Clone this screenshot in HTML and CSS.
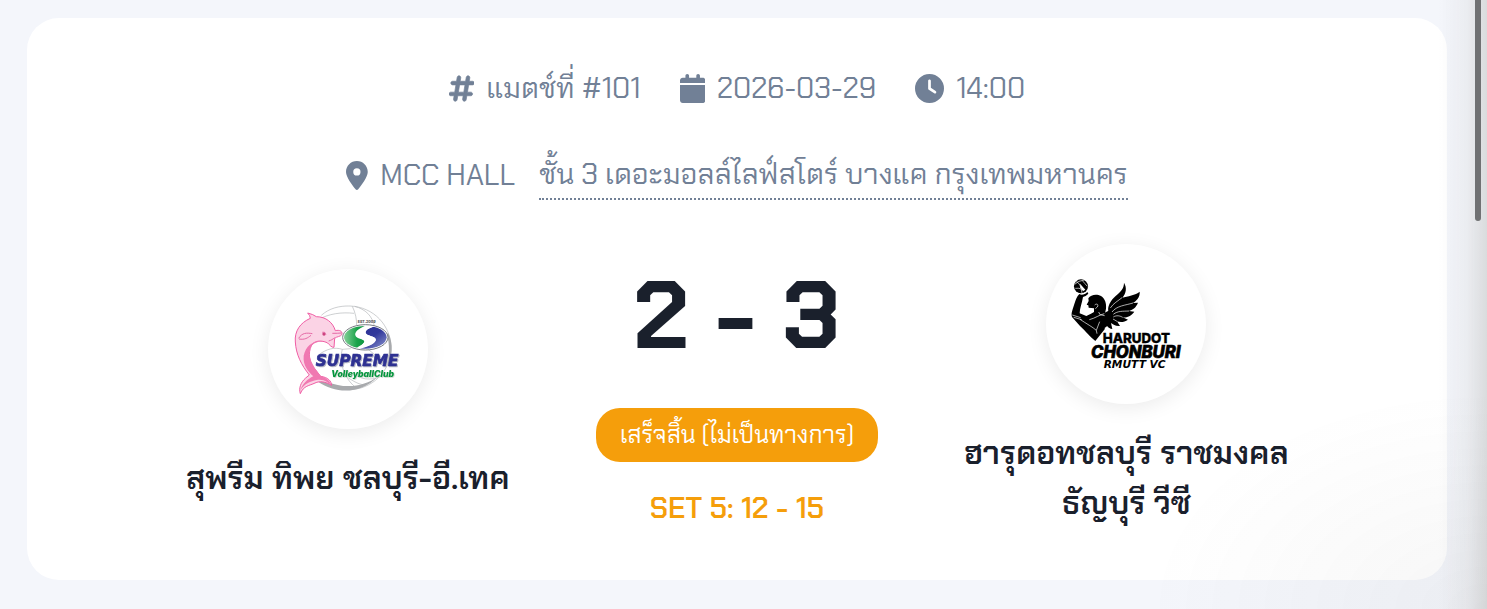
FILE: index.html
```html
<!DOCTYPE html>
<html lang="th">
<head>
<meta charset="utf-8">
<meta name="viewport" content="width=device-width, initial-scale=1">
<title>แมตช์ที่ #101</title>
<link rel="stylesheet" href="styles.css">
</head>
<body>
<main class="page">
<article class="match">
  <header class="meta">
    <div class="meta-row">
      <span class="meta-item">
        <svg class="icon" viewBox="0 0 448 512" aria-hidden="true"><path d="M181.3 32.4c17.4 2.9 29.2 19.4 26.3 36.8L197.8 128h95.1l11.5-69.3c2.9-17.4 19.4-29.2 36.8-26.3s29.2 19.4 26.3 36.8L357.8 128H416c17.7 0 32 14.3 32 32s-14.3 32-32 32H347.1L325.8 320H384c17.7 0 32 14.3 32 32s-14.3 32-32 32H315.1l-11.5 69.3c-2.9 17.4-19.4 29.2-36.8 26.3s-29.2-19.4-26.3-36.8l9.8-58.7H155.1l-11.5 69.3c-2.9 17.4-19.4 29.2-36.8 26.3s-29.2-19.4-26.3-36.8L90.2 384H32c-17.7 0-32-14.3-32-32s14.3-32 32-32h68.9l21.3-128H64c-17.7 0-32-14.3-32-32s14.3-32 32-32h68.9l11.5-69.3c2.9-17.4 19.4-29.2 36.8-26.3zM187.1 192L165.8 320h95.1l21.3-128H187.1z" stroke="currentColor" stroke-width="12"/></svg>
        <span>แมตช์ที่ #101</span>
      </span>
      <span class="meta-item">
        <svg class="icon" viewBox="0 0 448 512" aria-hidden="true"><path d="M96 32V64H48C21.5 64 0 85.5 0 112v48H448V112c0-26.5-21.5-48-48-48H352V32c0-17.7-14.3-32-32-32s-32 14.3-32 32V64H160V32c0-17.7-14.3-32-32-32S96 14.3 96 32zM448 192H0V464c0 26.5 21.5 48 48 48H400c26.5 0 48-21.5 48-48V192z"/></svg>
        <time datetime="2026-03-29">2026-03-29</time>
      </span>
      <span class="meta-item">
        <svg class="icon" viewBox="0 0 512 512" aria-hidden="true"><path fill-rule="evenodd" d="M256 0a256 256 0 1 1 0 512A256 256 0 1 1 256 0zM232 120V256c0 8 4 15.5 10.7 20l96 64c11 7.4 25.9 4.4 33.3-6.7s4.4-25.9-6.7-33.3L280 243.2V120c0-13.3-10.7-24-24-24s-24 10.7-24 24z"/></svg>
        <time datetime="14:00">14:00</time>
      </span>
    </div>
    <div class="meta-row venue">
      <span class="meta-item">
        <svg class="icon" viewBox="0 0 384 512" aria-hidden="true"><path fill-rule="evenodd" d="M215.7 499.2C267 435 384 279.4 384 192C384 86 298 0 192 0S0 86 0 192c0 87.4 117 243 168.3 307.2c12.3 15.3 35.1 15.3 47.4 0zM192 128a64 64 0 1 1 0 128 64 64 0 1 1 0-128z"/></svg>
        <span>MCC HALL</span>
      </span>
      <span class="address">ชั้น 3 เดอะมอลล์ไลฟ์สโตร์ บางแค กรุงเทพมหานคร</span>
    </div>
  </header>

  <div class="board">
    <section class="team">
      <svg class="logo" viewBox="24 27 480 480" role="img" aria-label="Supreme VolleyballClub">
        <defs>
          <linearGradient id="oval-green" x1="0" y1="0" x2="1" y2="0"><stop offset="0" stop-color="#8ed39f"/><stop offset=".5" stop-color="#1aa34a"/><stop offset="1" stop-color="#078a3b"/></linearGradient>
          <linearGradient id="oval-blue" x1="0" y1="0" x2="1" y2="1"><stop offset="0" stop-color="#2b2f92"/><stop offset=".5" stop-color="#31389b"/><stop offset="1" stop-color="#9aa4d6"/></linearGradient>
          <clipPath id="oval"><ellipse cx="316" cy="232" rx="64" ry="34"/></clipPath>
        </defs>
        <g fill="none" stroke="#b4b6b9" stroke-width="2">
          <path d="M184 166C207 145 238 137 270 138C342 141 393 197 393 264C393 334 336 389 266 389C241 389 218 384 198 371"/>
          <path d="M172 181C205 160 247 156 282 160M277 139C286 157 291 179 290 202M284 139C316 148 337 166 344 202M178 283C199 268 222 260 247 268C237 302 248 349 286 382M247 268L272 266M322 266L348 287M265 354C285 366 297 374 318 375M370 344C345 361 310 362 284 344"/>
        </g>
        <path d="M174 365C229 403 303 402 353 350C315 378 257 389 202 365Z" fill="#a8aaad"/>
        <path d="M385 220C401 252 397 292 381 321C388 287 390 252 380 223Z" fill="#a8aaad"/>
        <path d="M143 159Q160 163 169 170C198 170 219 188 226 212C239 209 247 213 246 223C241 231 230 229 224 235L222 262C215 263 209 255 203 249C190 242 170 240 158 251C145 268 145 299 158 319L182 349C204 352 214 363 215 376C196 365 180 362 165 369C149 377 130 377 121 401C116 386 121 368 137 354L148 345C124 315 108 283 106 246C103 213 121 188 151 175Q151 167 143 159Z" fill="#fbd3e5" stroke="#ef5da4" stroke-width="3" stroke-linejoin="round"/>
        <path d="M203 249C169 235 139 252 131 287C128 318 147 336 160 349C143 357 128 371 121 391C134 370 152 364 170 360C191 355 205 368 215 376C209 360 194 351 182 348C157 315 143 292 151 263C164 241 188 244 203 249Z" fill="#f078b1"/>
        <path d="M116 235C126 218 140 218 157 221M117 237C134 240 143 234 153 226M206 243C213 241 218 238 224 233M217 220Q233 220 244 219" fill="none" stroke="#e56aa6" stroke-width="3"/>
        <circle cx="192" cy="222" r="5" fill="#cc427e"/>
        <path d="M186 217Q194 212 198 224" fill="none" stroke="#e56aa6" stroke-width="2"/>
        <ellipse cx="316" cy="232" rx="68" ry="38" fill="#fff" stroke="#777b82" stroke-width="3"/>
        <g clip-path="url(#oval)">
          <path d="M248 190H334C304 201 283 212 286 226C289 239 320 236 311 249C306 258 293 262 285 270H248Z" fill="url(#oval-green)"/>
          <path d="M334 192H388V270H284C311 264 342 255 347 242C352 227 321 230 317 219C314 209 335 202 349 198Z" fill="url(#oval-blue)"/>
          <path d="M349 197C308 197 283 213 288 226C293 239 326 236 311 249C304 256 294 261 284 266C320 262 345 251 347 240C349 227 321 230 317 219C315 207 333 202 349 197Z" fill="#fff"/>
        </g>
        <g class="logo-text">
          <text x="293" y="189" font-size="11" fill="#555">EST.2009</text>
          <text class="supreme" x="167" y="319" font-size="46">SUPREME</text>
          <text class="club" x="214" y="351" font-size="26">VolleyballClub</text>
        </g>
      </svg>
      <h2 class="team-name">สุพรีม ทิพย ชลบุรี-อี.เทค</h2>
    </section>

    <section class="result">
      <p class="score">2 - 3</p>
      <p class="status">เสร็จสิ้น (ไม่เป็นทางการ)</p>
      <p class="set">SET 5: 12 - 15</p>
    </section>

    <section class="team">
      <svg class="logo" viewBox="30 24 480 480" role="img" aria-label="Harudot Chonburi RMUTT VC">
        <circle cx="135" cy="151" r="21"/>
        <path d="M116 145Q126 134 145 132M121 137Q134 141 138 171M139 134Q147 143 154 151M118 157Q130 155 137 160" fill="none" stroke="#fff" stroke-width="2"/>
        <path d="M132 143L148 161L141 166L133 154Z" fill="#fff"/>
        <path d="M130 174C136 178 147 176 154 168L157 173L149 180L141 183C138 201 131 218 131 232L151 240L165 233L174 228L174 217L158 215L157 208L152 206L158 195L157 187C164 175 183 173 195 180C207 187 212 202 210 218L206 236L211 242L206 280L178 315C165 305 149 286 132 270L108 243C104 231 111 219 115 204C120 190 122 182 130 174Z"/>
        <path d="M218 228C212 213 224 193 239 180C254 167 264 158 264 140C273 155 271 171 259 185C274 181 299 177 311 167C313 184 299 196 291 201L306 200C300 216 289 221 279 225L295 227C284 241 273 245 260 244L276 251C264 260 252 259 243 256L252 270C237 271 229 264 225 261L229 279C216 277 208 267 207 252Z"/>
        <path d="M203 232L222 222L232 256L206 276Z"/>
        <g fill="none" stroke="#fff" stroke-width="2">
          <path d="M109 237L134 245M113 244L137 251M132 250C151 263 170 273 181 283L183 293M181 283L191 257M160 251C177 247 191 236 205 233M176 207C181 202 189 204 184 213M178 218L184 213M188 228L192 236L206 239"/>
          <path d="M223 216C232 202 247 194 258 185M228 228C242 209 268 208 291 201M232 235C245 224 262 226 279 225M232 243C242 237 251 239 260 244M231 249L243 256"/>
        </g>
        <g class="logo-text">
          <text x="200" y="321" font-size="40" stroke="#000">HARUDOT</text>
          <text x="165" y="366" font-size="50" font-style="italic" stroke="#000" stroke-width="2">CHONBURI</text>
          <text class="sponsor" x="203" y="397" font-size="32">RMUTT VC</text>
        </g>
      </svg>
      <h2 class="team-name">ฮารุดอทชลบุรี ราชมงคลธัญบุรี วีซี</h2>
    </section>
  </div>
</article>
</main>
<div class="edge-shade"></div>
<div class="scroll-thumb"></div>
</body>
</html>
```
FILE: styles.css
```css
* { box-sizing: border-box; }
body {
  margin: 0;
  background: #f4f6fb;
  color: #1a202c;
  font-family: "Chakra Petch", Inter, "Noto Sans Thai", "Noto Sans", sans-serif;
}
h2, p { margin: 0; }
.page { padding: 18px 40px 29px 27px; }
.match {
  padding: 40px 40px 50px;
  border-radius: 32px;
  background: #fff;
}
.meta {
  display: grid;
  gap: 27px;
  color: #718096;
  font-size: 29px;
  line-height: 60px;
}
.meta-row { display: flex; justify-content: center; align-items: center; gap: 0 39px; }
.venue { gap: 0 24px; }
.meta-item { display: flex; align-items: center; gap: 12px; white-space: nowrap; }
.icon { height: 29px; fill: currentColor; }
.address { border-bottom: 2px dotted #718096; line-height: 48px; }
.board {
  display: grid;
  grid-template-columns: repeat(3, 1fr);
  gap: 48px;
  align-items: center;
  padding: 37px 110px 0;
}
.team { display: grid; justify-items: center; gap: 24px; }
.logo {
  width: 160px;
  height: 160px;
  border-radius: 50%;
  background: #fff;
  box-shadow: 0 4px 20px rgba(0, 0, 0, .08);
}
.logo-text { font-family: Inter, "Liberation Sans", sans-serif; font-weight: 800; }
.supreme {
  fill: #2e3192;
  stroke: #2e3192;
  stroke-width: 2px;
  font-family: "DejaVu Sans", sans-serif;
  font-style: italic;
  filter: drop-shadow(3px 3px 1px #b6b8c3);
}
.club {
  fill: #00953b;
  font-style: italic;
  filter: drop-shadow(2px 2px 1px #b9cbbb);
}
.sponsor { font-family: "DejaVu Sans", sans-serif; font-style: italic; }
.team-name { font-size: 32px; font-weight: 600; line-height: 50px; text-align: center; }
.result { display: grid; justify-items: center; white-space: nowrap; }
.score { font-size: 96px; font-weight: 700; line-height: 148px; }
.status {
  margin-top: 18px;
  padding: 0 24px;
  border-radius: 24px;
  background: #f59e0b;
  color: #fff;
  font-size: 24px;
  line-height: 54px;
}
.set { margin-top: 24px; color: #f59e0b; font-size: 29px; font-weight: 600; line-height: 44px; }
.edge-shade {
  position: fixed;
  inset: 0;
  pointer-events: none;
  background:
    linear-gradient(to left, rgba(170, 170, 165, .35), rgba(180, 180, 178, .14) 20px, transparent 48px),
    radial-gradient(ellipse 340px 220px at 100% 100%, rgba(80, 80, 80, .05), transparent);
}
.scroll-thumb {
  position: fixed;
  top: 0;
  right: 6px;
  width: 6px;
  height: 221px;
  border-radius: 0 0 3px 3px;
  background: #707173;
}
```
